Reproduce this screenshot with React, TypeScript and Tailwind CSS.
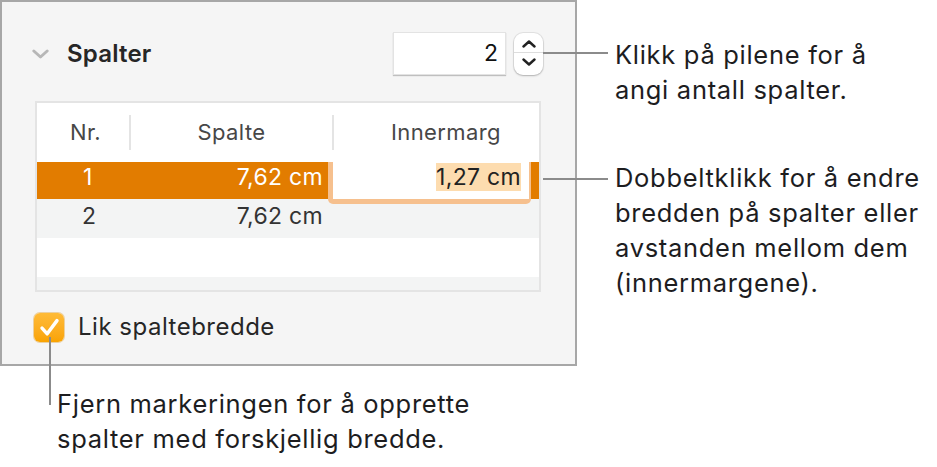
import React from "react";

const font = { fontFamily: 'Inter, "Liberation Sans", sans-serif' };

function Chevron({ dir, className }: { dir: "up" | "down"; className?: string }) {
  return (
    <svg viewBox="0 0 14 8" className={className} fill="none">
      <path
        d={dir === "up" ? "M1.5 6.5 L7 1.5 L12.5 6.5" : "M1.5 1.5 L7 6.5 L12.5 1.5"}
        stroke="currentColor"
        strokeWidth="2.4"
        strokeLinecap="round"
        strokeLinejoin="round"
      />
    </svg>
  );
}

function ColumnsTable() {
  return (
    <div className="ml-[33px] mt-[26px] w-[506px] border-2 border-[#e4e4e4] bg-white">
      {/* Header */}
      <div className="grid h-[59px] grid-cols-[92px_203px_207px] items-center bg-white text-[22px] tracking-[0.4px] text-[#474747]">
        <div className="pl-[33px]">Nr.</div>
        <div className="flex h-[35px] items-center justify-center border-l-2 border-[#e4e4e4]">Spalte</div>
        <div className="flex h-[35px] items-center border-l-2 border-[#e4e4e4] pl-[57px]">Innermarg</div>
      </div>

      {/* Row 1 - selected */}
      <div className="grid h-[37px] grid-cols-[92px_203px_207px] bg-[#e27c00] text-[23px] leading-[26px] tracking-[0.3px] text-white">
        <div className="pl-[46px] pt-[2px]">1</div>
        <div className="pr-[9px] pt-[2px] text-right">7,62 cm</div>
        <div className="relative">
          <div className="absolute left-[-4px] top-0 z-10 h-[42px] w-[203px] rounded-b-[5px] bg-[#f6c08e] pl-[5px] pr-[2px]">
            <div className="h-[37px] bg-white pr-[8px] pt-[2px] text-right text-[#222]">
              <span className="bg-[#fddcaf] leading-[27px]">1,27 cm</span>
            </div>
          </div>
        </div>
      </div>

      {/* Row 2 */}
      <div className="grid h-[39px] grid-cols-[92px_203px_207px] bg-[#f3f4f4] text-[23px] leading-[26px] tracking-[0.3px] text-[#333]">
        <div className="pl-[45px] pt-[4px]">2</div>
        <div className="pr-[9px] pt-[4px] text-right">7,62 cm</div>
        <div />
      </div>

      {/* Empty rows */}
      <div className="h-[39px] bg-white" />
      <div className="h-[13px] bg-[#f3f4f4]" />
    </div>
  );
}

export default function App() {
  return (
    <div className="relative h-[467px] w-[937px] overflow-hidden bg-white text-[#1d1d1f]" style={font}>
      <div className="flex">
        {/* Inspector panel */}
        <div className="box-border h-[366px] w-[577px] shrink-0 border-2 border-[#a7a7a7] bg-[#f5f5f5]">
          <div className="mt-[30px] flex h-[43px] items-center pl-[30px] pr-[32px]">
            <Chevron dir="down" className="h-[10px] w-[17px] text-[#b7b7b7]" />
            <span className="ml-[18px] text-[24px] font-semibold tracking-[0.2px] text-[#262626]">Spalter</span>
            <div className="flex-1" />
            <div className="flex h-[43px] w-[113px] items-center justify-end border border-[#e3e3e3] bg-white pr-[7px] text-[23px] text-[#111] shadow-[0_1px_1px_rgba(0,0,0,0.22)]">
              2
            </div>
            <div className="ml-[8px] flex h-[42px] w-[29px] flex-col items-center rounded-[9px] bg-white text-[#222] shadow-[0_0_0_1px_rgba(0,0,0,0.07),0_1px_2px_rgba(0,0,0,0.22)]">
              <div className="flex h-[20px] w-full items-end justify-center border-b border-[#dddddd] pb-[4px]">
                <Chevron dir="up" className="h-[8px] w-[14px]" />
              </div>
              <div className="flex h-[21px] w-full items-start justify-center pt-[5px]">
                <Chevron dir="down" className="h-[8px] w-[14px]" />
              </div>
            </div>
          </div>

          <ColumnsTable />

          <div className="ml-[32px] mt-[17px] flex items-center">
            <div className="flex h-[29px] w-[30px] items-center justify-center rounded-[6px] bg-gradient-to-b from-[#ffbb36] to-[#f9a300] shadow-[0_0_0_1px_rgba(220,140,0,0.35)]">
              <svg viewBox="0 0 20 20" className="h-[23px] w-[23px]" fill="none">
                <path d="M3.5 10.5 L8 15.5 L16.5 4" stroke="white" strokeWidth="3" strokeLinecap="round" strokeLinejoin="round" />
              </svg>
            </div>
            <span className="ml-[14px] text-[24px] tracking-[0.5px] text-[#262626]">Lik spaltebredde</span>
          </div>
        </div>

        {/* Right callouts */}
        <div className="pl-[38px] text-[25.5px] leading-[35px] tracking-[0.7px]">
          <p className="mt-[37px]">
            Klikk på pilene for å<br />angi antall spalter.
          </p>
          <p className="mt-[53px]">
            Dobbeltklikk for å endre
            <br />
            bredden på spalter eller
            <br />
            avstanden mellom dem
            <br />
            (innermargene).
          </p>
        </div>
      </div>

      {/* Bottom callout */}
      <p className="ml-[57px] mt-[20px] text-[25.5px] leading-[35px] tracking-[0.7px]">
        Fjern markeringen for å opprette
        <br />
        spalter med forskjellig bredde.
      </p>

      {/* Leader lines */}
      <div className="absolute left-[543px] top-[52px] h-[2px] w-[65px] bg-[#8b8b8b]" />
      <div className="absolute left-[543px] top-[178px] h-[2px] w-[65px] bg-[#8b8b8b]" />
      <div className="absolute left-[49px] top-[337px] h-[68px] w-[2px] bg-[#8b8b8b]" />
    </div>
  );
}
